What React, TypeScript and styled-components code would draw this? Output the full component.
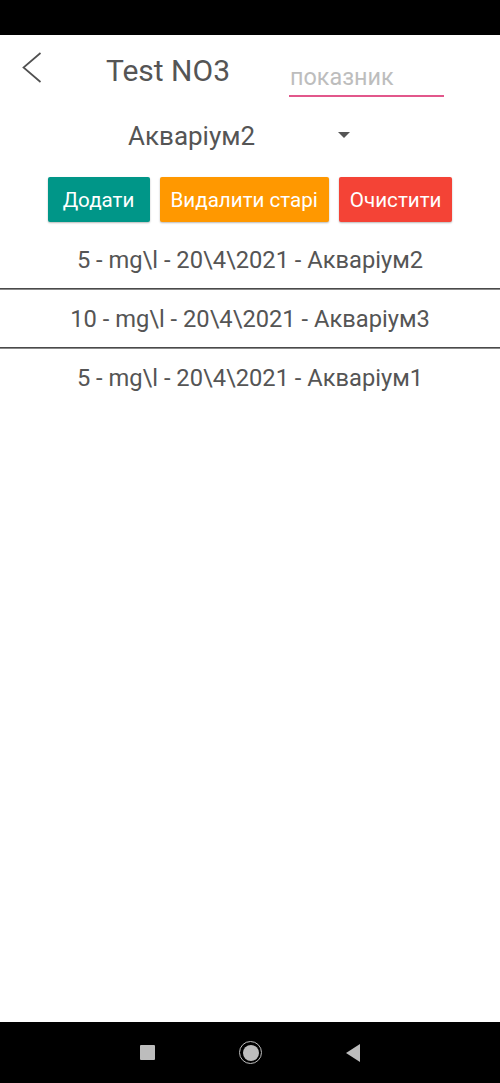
import React from "react";
import styled, { createGlobalStyle } from "styled-components";

const Global = createGlobalStyle`
  html, body { margin: 0; padding: 0; background: #000; }
  body { font-family: Roboto, "Noto Sans", Arial, sans-serif; }
  * { box-sizing: border-box; }
`;

const Screen = styled.div`
  width: 500px;
  height: 1083px;
  display: flex;
  flex-direction: column;
  background: #fff;
  overflow: hidden;
`;

const StatusBar = styled.div`
  height: 35px;
  flex: none;
  background: #000;
`;

const Main = styled.main`
  flex: 1;
  background: #fff;
  display: flex;
  flex-direction: column;
`;

const Header = styled.header`
  height: 75px;
  display: flex;
  align-items: flex-start;
  padding-left: 22px;
`;

const BackButton = styled.button`
  margin-top: 17px;
  width: 20px;
  height: 31px;
  padding: 0;
  border: 0;
  background: none;
  display: flex;
`;

const Title = styled.h1`
  margin: 21px 0 0 64px;
  font-size: 30px;
  line-height: 30px;
  font-weight: 400;
  color: #555;
  white-space: nowrap;
`;

const Field = styled.input`
  margin: 28px 56px 0 auto;
  width: 155px;
  height: 34px;
  padding: 0 0 4px 1px;
  border: 0;
  border-bottom: 2px solid #e2578b;
  outline: none;
  font-family: Roboto, "Noto Sans", Arial, sans-serif;
  font-size: 23.4px;
  line-height: 28px;
  color: #555;
  background: transparent;
  &::placeholder { color: #bdbdbd; }
`;

const Spinner = styled.div`
  margin: 11px 0 0 128px;
  width: 222px;
  height: 30px;
  display: flex;
  align-items: center;
`;

const SpinnerText = styled.span`
  flex: 1;
  font-size: 26px;
  line-height: 30px;
  color: #555;
`;

const Caret = styled.span`
  width: 0;
  height: 0;
  margin-top: -3px;
  border-left: 6px solid transparent;
  border-right: 6px solid transparent;
  border-top: 6px solid #555;
`;

const Buttons = styled.div`
  margin-top: 26px;
  display: flex;
  justify-content: center;
  gap: 10px;
`;

const ActionButton = styled.button<{ $bg: string }>`
  height: 45px;
  min-width: 102px;
  padding: 0 11px;
  border: 0;
  border-radius: 2px;
  background: ${(p) => p.$bg};
  color: #fff;
  font-family: Roboto, "Noto Sans", Arial, sans-serif;
  font-size: 20.6px;
  box-shadow: 0 1px 2px rgba(0, 0, 0, 0.28);
  white-space: nowrap;
`;

const List = styled.ul`
  list-style: none;
  margin: 9px 0 0;
  padding: 0;
`;

const Row = styled.li`
  height: 57px;
  display: flex;
  align-items: center;
  justify-content: center;
  font-size: 23.7px;
  color: #555;
  & + & {
    border-top: 1px solid #4a4a4a;
    box-shadow: inset 0 1px 0 #8a8a8a;
    height: 59px;
    padding-top: 2px;
  }
`;

const NavBar = styled.nav`
  height: 61px;
  flex: none;
  background: #000;
  display: flex;
  align-items: center;
  justify-content: center;
  gap: 84px;
`;

const NavSquare = styled.span`
  width: 15px;
  height: 15px;
  border-radius: 1px;
  background: #bdbdbd;
`;

const NavHome = styled.span`
  width: 23px;
  height: 23px;
  border-radius: 50%;
  border: 1.5px solid #bdbdbd;
  display: flex;
  align-items: center;
  justify-content: center;
  &::after {
    content: "";
    width: 16px;
    height: 16px;
    border-radius: 50%;
    background: #bdbdbd;
  }
`;

const NavBack = styled.span`
  width: 0;
  height: 0;
  border-top: 9px solid transparent;
  border-bottom: 9px solid transparent;
  border-right: 14px solid #bdbdbd;
`;

const records = [
  "5 - mg\\l - 20\\4\\2021 - Акваріум2",
  "10 - mg\\l - 20\\4\\2021 - Акваріум3",
  "5 - mg\\l - 20\\4\\2021 - Акваріум1",
];

export default function App() {
  return (
    <>
      <Global />
      <Screen>
        <StatusBar />
        <Main>
          <Header>
            <BackButton aria-label="back">
              <svg width="20" height="31" viewBox="0 0 20 31">
                <polyline
                  points="18.5,1 1.5,15.5 18.5,30"
                  fill="none"
                  stroke="#505050"
                  strokeWidth="1.7"
                />
              </svg>
            </BackButton>
            <Title>Test NO3</Title>
            <Field placeholder="показник" />
          </Header>
          <Spinner>
            <SpinnerText>Акваріум2</SpinnerText>
            <Caret />
          </Spinner>
          <Buttons>
            <ActionButton $bg="#009688">Додати</ActionButton>
            <ActionButton $bg="#ff9800">Видалити старі</ActionButton>
            <ActionButton $bg="#f44336">Очистити</ActionButton>
          </Buttons>
          <List>
            {records.map((r, i) => (
              <Row key={i}>{r}</Row>
            ))}
          </List>
        </Main>
        <NavBar>
          <NavSquare />
          <NavHome />
          <NavBack />
        </NavBar>
      </Screen>
    </>
  );
}
